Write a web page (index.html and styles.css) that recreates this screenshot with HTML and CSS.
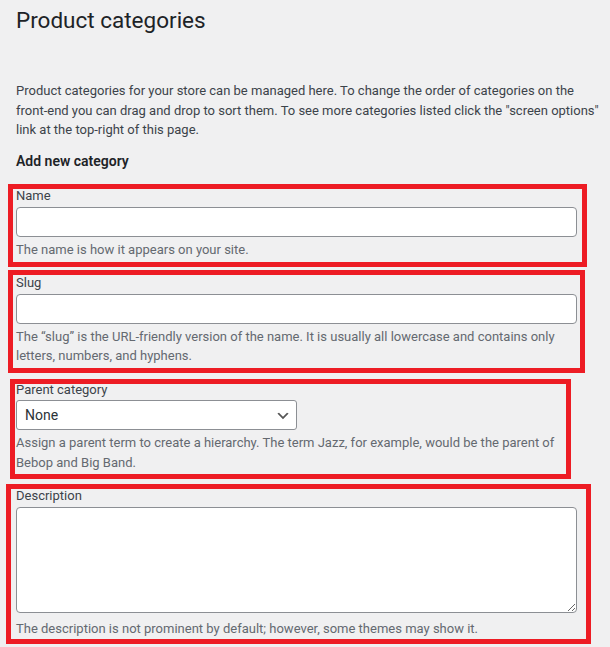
FILE: index.html
```html
<!DOCTYPE html>
<html lang="en">
<head>
    <meta charset="UTF-8">
    <meta name="viewport" content="width=device-width, initial-scale=1.0">
    <title>Product categories</title>
    <link rel="stylesheet" href="styles.css">
</head>
<body>
    <div class="wrap">
        <h1>Product categories</h1>

        <p class="intro">Product categories for your store can be managed here. To change the order of categories on the front-end you can drag and drop to sort them. To see more categories listed click the "screen options" link at the top-right of this page.</p>

        <div class="form-wrap">
            <h2>Add new category</h2>
            <form id="addtag">
                <div class="form-field mark-name">
                    <label for="tag-name">Name</label>
                    <input type="text" id="tag-name">
                    <p class="description">The name is how it appears on your site.</p>
                </div>
                <div class="form-field mark-slug">
                    <label for="tag-slug">Slug</label>
                    <input type="text" id="tag-slug">
                    <p class="description">The “slug” is the URL-friendly version of the name. It is usually all lowercase and contains only letters, numbers, and hyphens.</p>
                </div>
                <div class="form-field mark-parent">
                    <label for="parent">Parent category</label>
                    <select id="parent" class="postform">
                        <option value="-1">None</option>
                    </select>
                    <p class="description">Assign a parent term to create a hierarchy. The term Jazz, for example, would be the parent of Bebop and Big Band.</p>
                </div>
                <div class="form-field mark-description">
                    <label for="tag-description">Description</label>
                    <textarea id="tag-description" rows="5" cols="40"></textarea>
                    <p class="description">The description is not prominent by default; however, some themes may show it.</p>
                </div>
            </form>
        </div>
    </div>
</body>
</html>
```
FILE: styles.css
```css
body {
    margin: 0;
    padding: 0 4px 0 16px;
    background-color: #f0f0f1;
    color: #3c434a;
    font-family: -apple-system, BlinkMacSystemFont, "Segoe UI", Roboto, Oxygen-Sans, Ubuntu, Cantarell, "Helvetica Neue", sans-serif;
    font-size: 13px;
}
h1 {
    margin: 0;
    padding: 6px 0 0;
    font-size: 22.5px;
    font-weight: 400;
    line-height: 29px;
    color: #1d2327;
}
.intro {
    margin: 46px 0 0;
    line-height: 1.5;
}
.form-wrap h2 {
    margin: 12px 0 15px;
    font-size: 14px;
    font-weight: 600;
    line-height: 1.4;
    color: #1d2327;
}
.form-field {
    position: relative;
    margin-bottom: 14px;
}
.form-field label {
    display: block;
    line-height: 19.5px;
    margin-bottom: 1px;
    color: #3c434a;
}
.form-field input,
.form-field textarea {
    display: block;
    width: 95%;
    margin: 0;
    box-sizing: border-box;
    background-color: #fff;
    border: 1px solid #8c8f94;
    border-radius: 4px;
    color: #2c3338;
    font: inherit;
}
.form-field input {
    height: 30px;
    padding: 0 8px;
}
.form-field textarea {
    height: 106px;
    padding: 2px 6px;
}
.form-field select {
    display: block;
    width: 281px;
    height: 30px;
    margin: 0;
    padding: 0 24px 0 8px;
    border: 1px solid #8c8f94;
    border-radius: 3px;
    color: #2c3338;
    font-family: inherit;
    font-size: 14px;
    -webkit-appearance: none;
    appearance: none;
    background: #fff url('data:image/svg+xml;charset=US-ASCII,%3Csvg%20width%3D%2220%22%20height%3D%2220%22%20xmlns%3D%22http%3A%2F%2Fwww.w3.org%2F2000%2Fsvg%22%3E%3Cpath%20d%3D%22M5%206l5%205%205-5%202%201-7%207-7-7%202-1z%22%20fill%3D%22%23555%22%2F%3E%3C%2Fsvg%3E') no-repeat right 5px top 55%;
    background-size: 16px 16px;
}
.form-field .description {
    max-width: 95%;
    margin: 3px 0 0;
    line-height: 19.5px;
    color: #646970;
}
.form-field textarea + .description {
    margin-top: 6px;
}

/* red outline around each field */
.form-field::after {
    content: "";
    position: absolute;
    border: 5px solid #ed1c24;
    pointer-events: none;
}
.mark-name::after {
    top: -2px;
    right: 19px;
    bottom: -8px;
    left: -8px;
}
.mark-slug::after {
    top: -3px;
    right: 21px;
    bottom: -7px;
    left: -8px;
}
.mark-parent::after {
    top: -1px;
    right: 35px;
    bottom: -7px;
    left: -6px;
}
.mark-description::after {
    top: -2px;
    right: 15px;
    bottom: -6px;
    left: -10px;
}
```
